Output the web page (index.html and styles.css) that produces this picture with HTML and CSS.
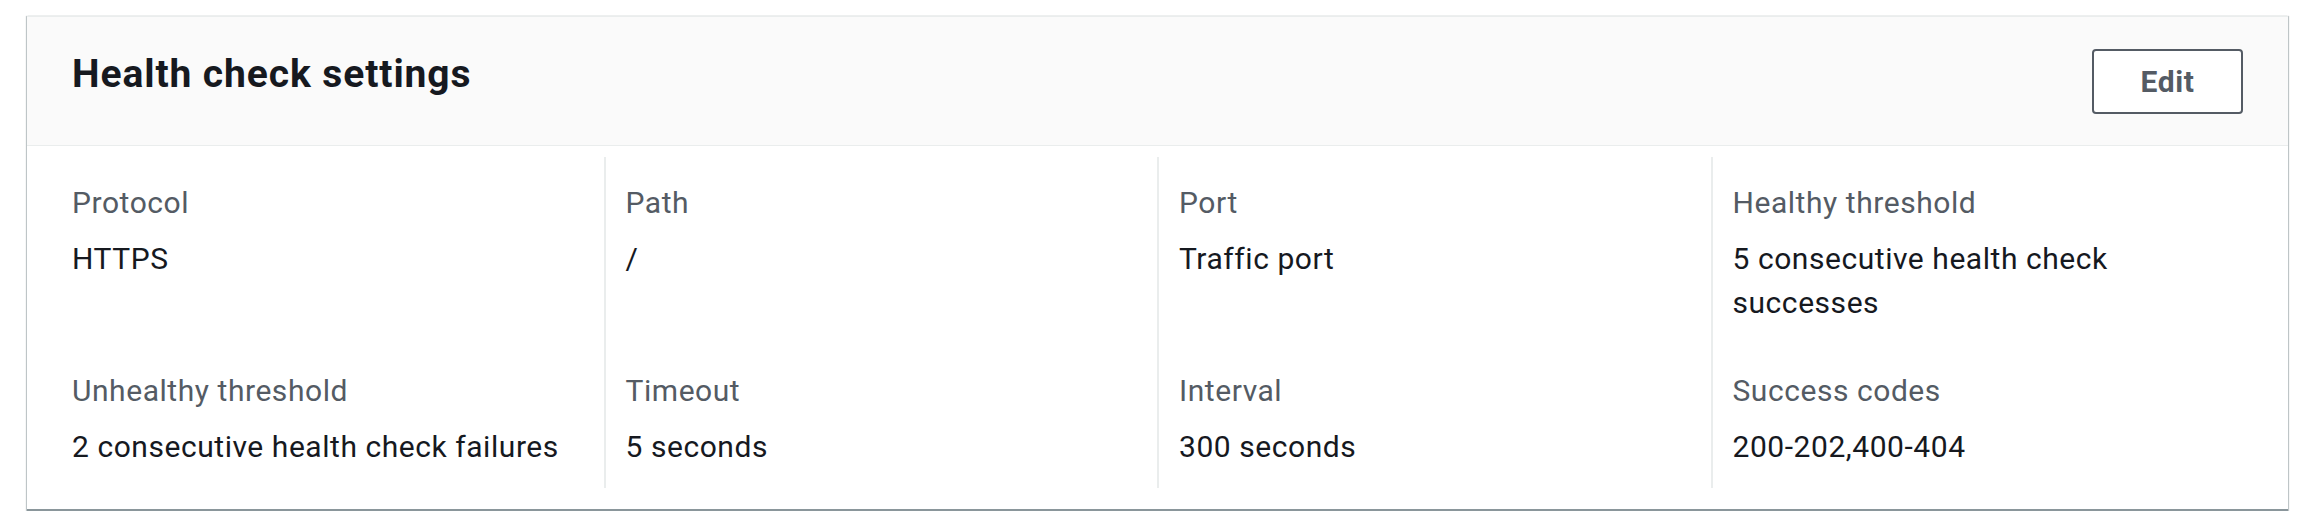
FILE: index.html
```html
<!DOCTYPE html>
<html lang="en">
<head>
<meta charset="utf-8">
<title>Health check settings</title>
<link rel="stylesheet" href="styles.css">
</head>
<body>
  <section class="card">
    <header class="card-header">
      <h2 class="card-title">Health check settings</h2>
      <button class="btn" type="button">Edit</button>
    </header>
    <div class="card-body">
      <div class="kv-grid">
        <div class="kv row1"><div class="kv-label">Protocol</div><div class="kv-value">HTTPS</div></div>
        <div class="kv row1 bordered"><div class="kv-label">Path</div><div class="kv-value">/</div></div>
        <div class="kv row1 bordered"><div class="kv-label">Port</div><div class="kv-value">Traffic port</div></div>
        <div class="kv row1 bordered"><div class="kv-label">Healthy threshold</div><div class="kv-value">5 consecutive health check successes</div></div>
        <div class="kv row2"><div class="kv-label">Unhealthy threshold</div><div class="kv-value">2 consecutive health check failures</div></div>
        <div class="kv row2 bordered"><div class="kv-label">Timeout</div><div class="kv-value">5 seconds</div></div>
        <div class="kv row2 bordered"><div class="kv-label">Interval</div><div class="kv-value">300 seconds</div></div>
        <div class="kv row2 bordered"><div class="kv-label">Success codes</div><div class="kv-value">200-202,400-404</div></div>
      </div>
    </div>
  </section>
</body>
</html>
```

FILE: styles.css
```css
html, body {
  margin: 0;
  background: #ffffff;
}

body {
  padding: 16px 30px 0 27px;
  font-family: "Roboto", "Liberation Sans", sans-serif;
  color: #16191f;
}

.card {
  background: #ffffff;
  border-top: 1px solid #eaeded;
  border-bottom: 2px solid #8a969b;
  box-shadow: 0 1px 1px 0 rgba(0, 28, 36, 0.25), 1px 0 1px 0 rgba(0, 28, 36, 0.22), -1px 0 1px 0 rgba(0, 28, 36, 0.22);
}

.card-header {
  display: flex;
  justify-content: space-between;
  align-items: flex-start;
  background: #fafafa;
  border-bottom: 1px solid #eaeded;
  padding: 32px 45px 31px 45px;
}

.card-title {
  margin: 2px 0 0 0;
  font-size: 39px;
  line-height: 47px;
  font-weight: 700;
  letter-spacing: 0.9px;
  color: #16191f;
}

.btn {
  font-family: inherit;
  font-size: 30px;
  line-height: 43px;
  font-weight: 700;
  letter-spacing: 0.6px;
  color: #545b64;
  background: #ffffff;
  border: 2px solid #545b64;
  border-radius: 4px;
  padding: 9px 0;
  height: 65px;
  width: 151px;
  cursor: pointer;
}

.card-body {
  padding: 11px 24px 21px 23px;
}

.kv-grid {
  display: grid;
  grid-template-columns: repeat(4, 1fr);
}

.kv {
  padding: 24px 35px 0 22px;
}

.kv.bordered {
  border-left: 2px solid #eaeded;
  padding-left: 20px;
}

.kv.row1 {
  padding-bottom: 44px;
}

.kv.row2 {
  padding-top: 0;
  padding-bottom: 19px;
}

.kv-label {
  font-size: 30px;
  line-height: 44px;
  letter-spacing: 0.55px;
  color: #545b64;
  margin-bottom: 12px;
}

.kv-value {
  font-size: 30px;
  line-height: 44px;
  letter-spacing: 0.55px;
  color: #16191f;
}
```
